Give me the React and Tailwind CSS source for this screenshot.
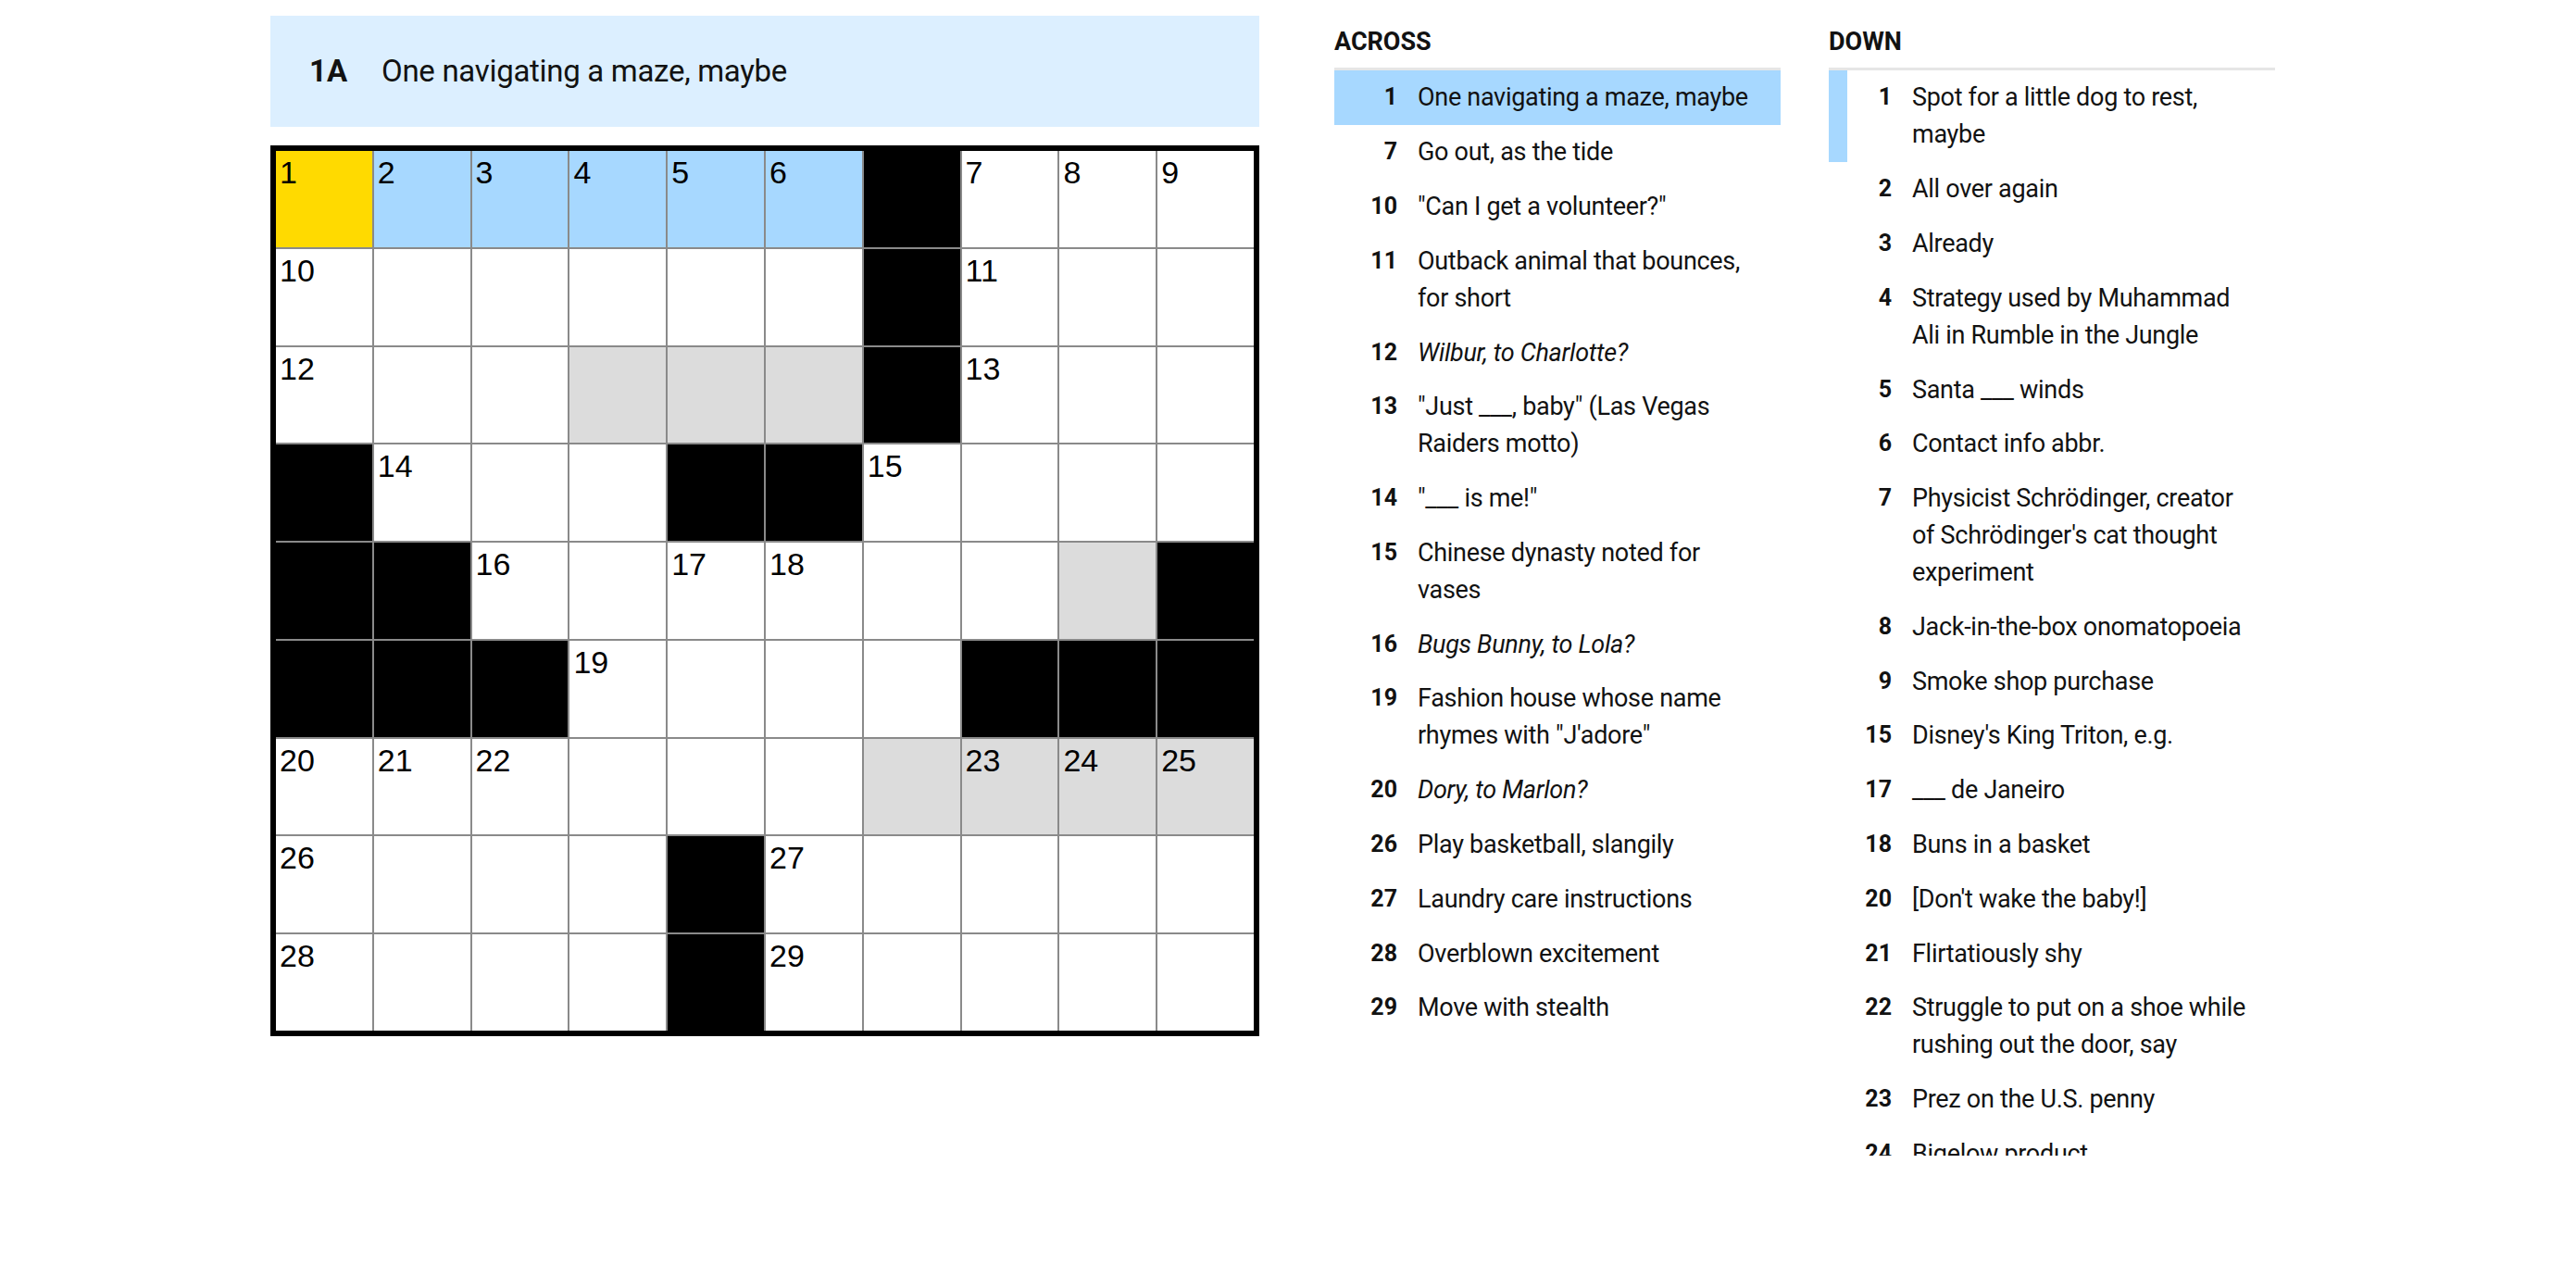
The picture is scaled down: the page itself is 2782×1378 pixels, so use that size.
import React from "react";

const W = null;
const grid = [
  [["1", "y"], ["2", "b"], ["3", "b"], ["4", "b"], ["5", "b"], ["6", "b"], W, ["7"], ["8"], ["9"]],
  [["10"], [], [], [], [], [], W, ["11"], [], []],
  [["12"], [], [], ["", "g"], ["", "g"], ["", "g"], W, ["13"], [], []],
  [W, ["14"], [], [], W, W, ["15"], [], [], []],
  [W, W, ["16"], [], ["17"], ["18"], [], [], ["", "g"], W],
  [W, W, W, ["19"], [], [], [], W, W, W],
  [["20"], ["21"], ["22"], [], [], [], ["", "g"], ["23", "g"], ["24", "g"], ["25", "g"]],
  [["26"], [], [], [], W, ["27"], [], [], [], []],
  [["28"], [], [], [], W, ["29"], [], [], [], []],
];

const across = [
  { n: 1, t: "One navigating a maze, maybe", on: true },
  { n: 7, t: "Go out, as the tide" },
  { n: 10, t: '"Can I get a volunteer?"' },
  { n: 11, t: "Outback animal that bounces, for short" },
  { n: 12, t: "Wilbur, to Charlotte?", i: true },
  { n: 13, t: '"Just ___, baby" (Las Vegas Raiders motto)' },
  { n: 14, t: '"___ is me!"' },
  { n: 15, t: "Chinese dynasty noted for vases" },
  { n: 16, t: "Bugs Bunny, to Lola?", i: true },
  { n: 19, t: 'Fashion house whose name rhymes with "J\'adore"' },
  { n: 20, t: "Dory, to Marlon?", i: true },
  { n: 26, t: "Play basketball, slangily" },
  { n: 27, t: "Laundry care instructions" },
  { n: 28, t: "Overblown excitement" },
  { n: 29, t: "Move with stealth" },
];

const down = [
  { n: 1, t: "Spot for a little dog to rest, maybe", cross: true },
  { n: 2, t: "All over again" },
  { n: 3, t: "Already" },
  { n: 4, t: "Strategy used by Muhammad Ali in Rumble in the Jungle" },
  { n: 5, t: "Santa ___ winds" },
  { n: 6, t: "Contact info abbr." },
  { n: 7, t: "Physicist Schrödinger, creator of Schrödinger's cat thought experiment" },
  { n: 8, t: "Jack-in-the-box onomatopoeia" },
  { n: 9, t: "Smoke shop purchase" },
  { n: 15, t: "Disney's King Triton, e.g." },
  { n: 17, t: "___ de Janeiro" },
  { n: 18, t: "Buns in a basket" },
  { n: 20, t: "[Don't wake the baby!]" },
  { n: 21, t: "Flirtatiously shy" },
  { n: 22, t: "Struggle to put on a shoe while rushing out the door, say" },
  { n: 23, t: "Prez on the U.S. penny" },
  { n: 24, t: "Bigelow product" },
];

function Cell({ cell }) {
  if (cell === null) return <div className="bg-black" />;
  const [num, kind] = cell;
  const bg =
    kind === "y" ? "bg-[#ffda00]" : kind === "b" ? "bg-[#a7d8ff]" : kind === "g" ? "bg-[#dcdcdc]" : "bg-white";
  return (
    <div className={`relative ${bg}`}>
      {num ? (
        <span className="absolute left-[4px] top-[6px] text-[34px] leading-none text-black font-['Liberation_Sans',Arial,sans-serif]">
          {num}
        </span>
      ) : null}
    </div>
  );
}

function ClueItem({ c }) {
  const row = c.on
    ? "bg-[#a7d8ff] border-transparent"
    : c.cross
    ? "border-[#a7d8ff]"
    : "border-transparent";
  return (
    <li className={`flex items-start border-l-[20px] pl-[5px] py-[9.4px] ${row}`}>
      <span className="w-[43px] shrink-0 text-right font-bold text-[25px] leading-[40px] mr-[22px]">{c.n}</span>
      <span className={`w-[366px] text-[27px] tracking-[-0.3px] leading-[40px] ${c.i ? "italic" : ""}`}>{c.t}</span>
    </li>
  );
}

function ClueList({ title, items }) {
  return (
    <section className="w-[482px] h-[1231px] overflow-hidden flex flex-col">
      <h3 className="font-bold text-[27px] leading-[38px] pt-[9px] pb-[9px] border-b-[3px] border-[#e6e6e6]">
        {title}
      </h3>
      <ol>
        {items.map((c) => (
          <ClueItem key={c.n} c={c} />
        ))}
      </ol>
    </section>
  );
}

export default function App() {
  return (
    <div className="w-[2782px] h-[1378px] bg-white overflow-hidden text-[#121212] font-['Roboto',sans-serif]">
      <div className="flex pt-[17px] pl-[292px]">
        <div className="w-[1068px] flex flex-col">
          <div className="h-[120px] bg-[#dcefff] flex items-center pl-[42px]">
            <span className="w-[78px] font-bold text-[33px]">1A</span>
            <span className="text-[33px] tracking-[-0.3px]">One navigating a maze, maybe</span>
          </div>
          <div className="mt-[20px] border-[6px] border-black">
            <div className="grid grid-cols-10 grid-rows-9 gap-[2px] w-[1056px] h-[950px] bg-[#8a8a8a]">
              {grid.flatMap((row, r) => row.map((cell, c) => <Cell key={`${r}-${c}`} cell={cell} />))}
            </div>
          </div>
        </div>
        <div className="ml-[81px] flex gap-[52px]">
          <ClueList title="ACROSS" items={across} />
          <ClueList title="DOWN" items={down} />
        </div>
      </div>
    </div>
  );
}
